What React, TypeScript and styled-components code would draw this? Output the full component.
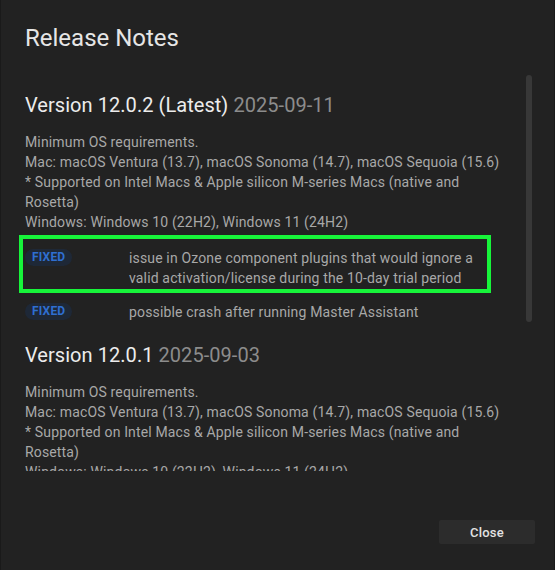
import React from "react";
import styled, { createGlobalStyle } from "styled-components";

const Global = createGlobalStyle`
  html, body { margin: 0; padding: 0; background: #222222; }
  body { font-family: Roboto, "Noto Sans", "Liberation Sans", sans-serif; -webkit-font-smoothing: antialiased; }
  * { box-sizing: border-box; }
`;

const Dialog = styled.div`
  width: 555px;
  height: 570px;
  background: #222222;
  border-left: 1px solid #1a1a1a;
  border-right: 1px solid #1a1a1a;
  display: flex;
  flex-direction: column;
`;

const Title = styled.h2`
  margin: 0;
  padding: 22px 24px 19px;
  font-size: 24px;
  line-height: 32px;
  font-weight: 400;
  color: #e6e6e6;
`;

const ScrollArea = styled.div`
  position: relative;
  height: 398px;
  overflow: hidden;
`;

const ScrollContent = styled.div`
  padding: 20px 51px 0 24px;
  display: flex;
  flex-direction: column;
  gap: 21px;
`;

const Thumb = styled.div`
  position: absolute;
  top: 2px;
  left: 525px;
  width: 6px;
  height: 247px;
  border-radius: 3px;
  background: #383838;
`;

const Section = styled.section`
  display: flex;
  flex-direction: column;
`;

const VersionTitle = styled.h3`
  margin: 0 0 15px;
  font-size: 20px;
  line-height: 24px;
  font-weight: 400;
  letter-spacing: 0.05px;
  color: #ececec;
`;

const DateText = styled.span`
  color: #8c8c8c;
`;

const Body = styled.div`
  font-size: 14px;
  line-height: 20px;
  letter-spacing: 0.15px;
  color: #a8a8a8;
`;

const Changes = styled.div`
  display: flex;
  flex-direction: column;
  gap: 14px;
  margin-top: 16px;
`;

const ChangeRow = styled.div<{ $highlight?: boolean }>`
  position: relative;
  display: grid;
  grid-template-columns: 104px 365px;
  align-items: start;
  &::after {
    content: "";
    display: ${(p) => (p.$highlight ? "block" : "none")};
    position: absolute;
    top: -13px;
    bottom: -5px;
    left: -6px;
    right: 12px;
    border: 4px solid #17f43a;
    pointer-events: none;
  }
`;

const Badge = styled.span`
  justify-self: start;
  margin-top: 1px;
  height: 17px;
  padding: 0 7px;
  border-radius: 9px;
  background: #1e2837;
  color: #2f6fd1;
  font-size: 12px;
  font-weight: 700;
  line-height: 17px;
  letter-spacing: 0.2px;
`;

const ChangeText = styled.div`
  font-size: 14px;
  line-height: 20px;
  letter-spacing: 0.15px;
  color: #a8a8a8;
`;

const Actions = styled.div`
  flex: 1;
  display: flex;
  justify-content: flex-end;
  align-items: flex-end;
  padding: 0 19px 26px;
`;

const CloseButton = styled.button`
  width: 96px;
  height: 24px;
  border: none;
  border-radius: 2px;
  background: #2c2c2c;
  color: #e2e2e2;
  font-family: inherit;
  font-size: 13px;
  font-weight: 500;
  letter-spacing: 0.2px;
  cursor: pointer;
`;

const osReq = (
  <>
    Minimum OS requirements.
    <br />
    Mac: macOS Ventura (13.7), macOS Sonoma (14.7), macOS Sequoia (15.6)
    <br />* Supported on Intel Macs &amp; Apple silicon M-series Macs (native and Rosetta)
    <br />
    Windows: Windows 10 (22H2), Windows 11 (24H2)
  </>
);

export default function App() {
  return (
    <>
      <Global />
      <Dialog>
        <Title>Release Notes</Title>
        <ScrollArea>
          <ScrollContent>
            <Section>
              <VersionTitle>
                Version 12.0.2 (Latest) <DateText>2025-09-11</DateText>
              </VersionTitle>
              <Body>{osReq}</Body>
              <Changes>
                <ChangeRow $highlight>
                  <Badge>FIXED</Badge>
                  <ChangeText>
                    issue in Ozone component plugins that would ignore a valid activation/license during the
                    10-day trial period
                  </ChangeText>
                </ChangeRow>
                <ChangeRow>
                  <Badge>FIXED</Badge>
                  <ChangeText>possible crash after running Master Assistant</ChangeText>
                </ChangeRow>
              </Changes>
            </Section>
            <Section>
              <VersionTitle>
                Version 12.0.1 <DateText>2025-09-03</DateText>
              </VersionTitle>
              <Body>{osReq}</Body>
            </Section>
          </ScrollContent>
          <Thumb />
        </ScrollArea>
        <Actions>
          <CloseButton>Close</CloseButton>
        </Actions>
      </Dialog>
    </>
  );
}
